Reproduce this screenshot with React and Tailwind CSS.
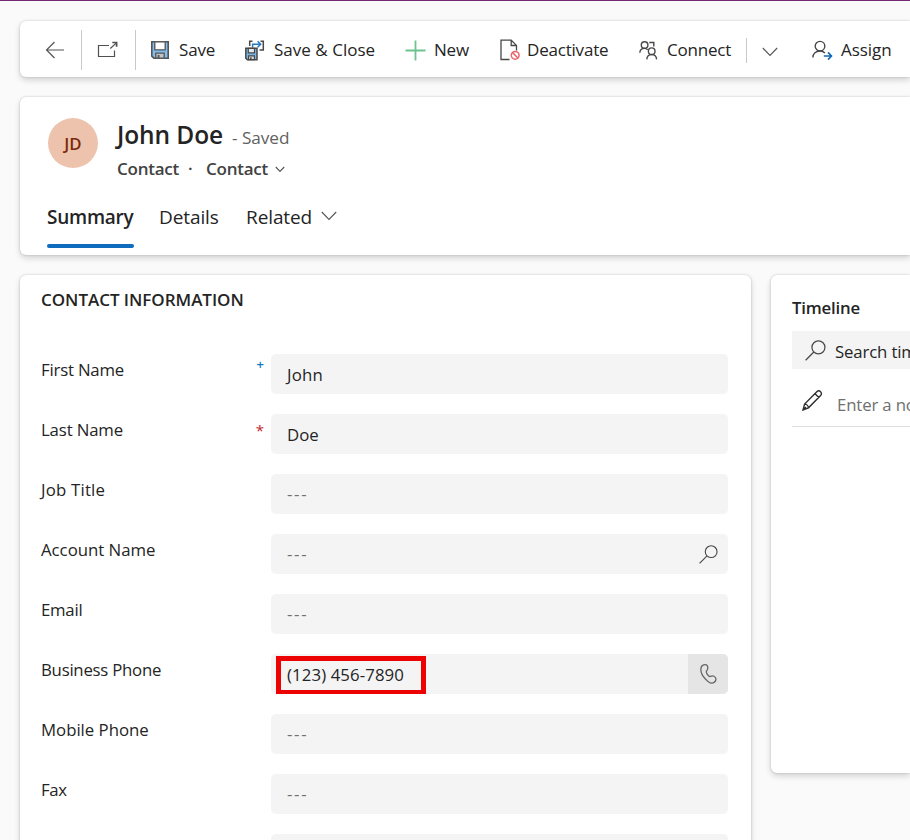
import React from "react";

const card = "bg-white shadow-[0_0_2px_rgba(0,0,0,0.22),0_3px_6px_rgba(0,0,0,0.16)]";

function Svg({ w, h, children, className = "", color = "#484848", sw = 1.2 }) {
  return (
    <svg width={w} height={h} viewBox={`0 0 ${w} ${h}`} fill="none" stroke={color} strokeWidth={sw} className={`shrink-0 ${className}`}>
      {children}
    </svg>
  );
}

const BackIcon = () => (
  <Svg w={20} h={20} sw={1.2} color="#555555">
    <path d="M19 10H2M9.500 2L1.500 10l8 8" />
  </Svg>
);

const PopOutIcon = () => (
  <Svg w={22} h={18} color="#505050">
    <path d="M12 4.500H1.500V15.500h16V9.500M13.300 7.500L19.400 1.900" />
    <path d="M15.300 1.500h4.300v4.300" strokeWidth="1.7" />
  </Svg>
);

const SaveIcon = () => (
  <Svg w={18} h={18} color="#555555" sw={1.6}>
    <path d="M.8.800h16.400v16.400H2.900L.8 15.200z" fill="#83bdec" />
    <path d="M3.800.800h10.400v8H3.800z" fill="#fff" strokeWidth="1.3" />
    <path d="M4.800 17.200v-5h8.400v5z" fill="#c4c4c4" strokeWidth="1.3" />
    <path d="M7.600 14v3.200" strokeWidth="1.800" />
  </Svg>
);

const SaveCloseIcon = () => (
  <Svg w={21} h={21} color="#484848" sw={1.5}>
    <path d="M7.500 1.300H4.700V6M15.500 1.300h2.800v8.800h-3.800" />
    <path d="M7.600 7.500V4.200h8M12.600 1.200l3.100 3-3.100 3" stroke="#2478c4" strokeWidth="1.500" />
    <path d="M.8 8.300h11.200v11.400H2.400L.8 18.100z" fill="#78b6e6" />
    <path d="M3.300 8.300h6.200v4.600H3.300z" fill="#e8e8e8" strokeWidth="1.200" />
    <path d="M3.600 19.700v-3.800h5.800v3.800z" fill="#ddd" strokeWidth="1.200" />
    <path d="M5.900 17.300v2.200" />
  </Svg>
);

const PlusIcon = () => (
  <Svg w={21} h={21} color="#6dc38e" sw={1.8}>
    <path d="M10.500.500v20M.500 10.500h20" />
  </Svg>
);

const DeactivateIcon = () => (
  <Svg w={21} h={22} sw={1.300}>
    <path d="M9.500 20.500H1V1.200h10.200l5.300 5.200v5M11.200 1.200v5.300h5.300" />
    <circle cx="15.200" cy="16.300" r="3.900" stroke="#ec6369" strokeWidth="1.500" />
    <path d="M12.500 13.600l5.400 5.400" stroke="#ec6369" strokeWidth="1.500" />
  </Svg>
);

const ConnectIcon = () => (
  <Svg w={19} h={21} sw={1.4}>
    <circle cx="5.600" cy="5" r="3.300" />
    <path d="M.8 12.700C1 10 3 8.400 5.400 8.400c1.400 0 2.400.400 3.300 1.300M10.300 2.500h4.500V6.600" />
    <circle cx="12.700" cy="11.200" r="3.300" />
    <path d="M7.800 19.400c.2-3 2.200-4.800 4.900-4.800s4.700 1.800 4.900 4.800" />
  </Svg>
);

const AssignIcon = () => (
  <Svg w={22} h={21} sw={1.4}>
    <circle cx="8" cy="6.200" r="4.800" />
    <path d="M.9 17.400c0-3.800 3-6.400 7.100-6.400 2.200 0 3.600.600 4.900 2" />
    <path d="M11.800 16h7.500M16 12.400l3.500 3.600-3.500 3.600" stroke="#1267b4" strokeWidth="1.600" />
  </Svg>
);

const Chevron = ({ w = 16, h = 10, className = "" }) => (
  <Svg w={w} h={h} className={className} sw={1.1} color="#555555">
    <path d={`M.8 1l${w / 2 - 0.8} ${h - 2.5}L${w - 0.8} 1`} />
  </Svg>
);

const SearchIcon = ({ size = 19 }) => (
  <svg width={size} height={size} viewBox="0 0 20 20" fill="none" stroke="#4a4a4a" strokeWidth="1.2" className="shrink-0">
    <circle cx="12.800" cy="7" r="6.200" />
    <path d="M8.400 11.400L.600 19.300" />
  </svg>
);

const PhoneIcon = () => (
  <Svg w={17} h={22} color="#666666" sw={1.300}>
    <path d="M2.600 2.400c1.500-1 3.700-1.200 4.600.2.900 1.600.9 3.100-.1 4.500-.8.9-1 1.600-.6 2.600.6 1.500 1.500 2.700 2.500 3.500.9.600 1.500.300 2.400-.1 1.700-.6 3.700.300 4.300 2 .500 1.500-.2 3.300-1.600 4.300-2.500 1.500-5.800.1-8.500-3.200C2 12.700.600 9 .9 5.600c.1-1.400.700-2.500 1.700-3.200z" />
  </Svg>
);

const PencilIcon = () => (
  <Svg w={21} h={21} color="#303030" sw={1.4}>
    <path d="M1 20l1.600-6L14.800 1.800c1.100-1.100 2.700-1.100 3.800-.1 1.100 1.100 1.100 2.800 0 3.900L6.500 17.800zM13 3.700l3.900 3.900M2.600 14c1.900.1 3.700 1.900 3.900 3.800M1 20l3-3" />
  </Svg>
);

function Command({ icon, label, className, iconBox, track = "" }) {
  return (
    <button className={`flex shrink-0 items-center text-left ${className}`}>
      <span className={`flex shrink-0 ${iconBox}`}>{icon}</span>
      <span className={`whitespace-nowrap ${track}`}>{label}</span>
    </button>
  );
}

function Toolbar() {
  return (
    <div className={`flex h-14 shrink-0 items-center rounded-l-md pl-[25px] pt-0.5 text-[17px] ${card}`}>
      <span className="w-9 shrink-0"><BackIcon /></span>
      <span className="h-10 w-px shrink-0 bg-[#c8c8c8]" />
      <span className="w-[53px] shrink-0 pl-[15px]"><PopOutIcon /></span>
      <span className="h-10 w-px shrink-0 bg-[#c8c8c8]" />
      <Command icon={<SaveIcon />} label="Save" className="ml-[15px] w-[94px]" iconBox="w-7" track="tracking-[-0.15px]" />
      <Command icon={<SaveCloseIcon />} label="Save & Close" className="w-[160px]" iconBox="w-[29px]" track="tracking-[0.02px]" />
      <Command icon={<PlusIcon />} label="New" className="w-[95px]" iconBox="w-[29px]" track="tracking-[-0.2px]" />
      <Command icon={<DeactivateIcon />} label="Deactivate" className="w-[139px]" iconBox="w-[27px]" track="tracking-[-0.2px]" />
      <Command icon={<ConnectIcon />} label="Connect" className="w-[107px]" iconBox="w-7" track="tracking-[-0.2px]" />
      <span className="h-[25px] w-px shrink-0 bg-[#c8c8c8]" />
      <span className="w-[65px] shrink-0 pl-[15px] pt-1"><Chevron w={16} h={10} /></span>
      <Command icon={<AssignIcon />} label="Assign" className="w-24" iconBox="w-[29px]" track="tracking-[-0.05px]" />
    </div>
  );
}

function RecordHeader() {
  return (
    <div className={`mt-5 h-[158px] shrink-0 rounded-l-md pl-[27px] ${card}`}>
      <div className="flex pt-[21px]">
        <div className="ml-px flex size-[50px] items-center justify-center rounded-full bg-[#eec3ad] pt-px text-[16.8px] font-semibold text-[#7a2a0c]">
          <span>JD</span>
        </div>
        <div className="ml-[19px]">
          <div className="flex h-[34px] items-baseline">
            <h1 className="w-[115px] whitespace-nowrap text-[24.5px] font-semibold leading-[34px] tracking-[-0.1px] text-[#242424]">John Doe</h1>
            <span className="text-[17.2px] tracking-[-0.05px] text-[#616161]">- Saved</span>
          </div>
          <div className="flex h-[33px] items-center text-[17px] font-semibold tracking-[-0.25px] text-[#424242]">
            <span className="w-[71px]">Contact</span>
            <span className="w-[18px]">·</span>
            <span className="w-[69px]">Contact</span>
            <Chevron w={10} h={7} className="mt-0.5" />
          </div>
        </div>
      </div>
      <div className="mt-5 flex text-[19px] leading-6 text-[#242424]">
        <div className="w-[87px]">
          <div className="font-semibold tracking-[-0.25px]">Summary</div>
          <div className="mt-[15px] h-1 rounded-full bg-[#0f6cbd]" />
        </div>
        <div className="ml-[25px] w-[87px] tracking-[-0.1px]">Details</div>
        <div className="w-[75px] tracking-[-0.1px]">Related</div>
        <Chevron w={16} h={10} className="mt-1.5" />
      </div>
    </div>
  );
}

const fields = [
  { label: "First Name", value: "John", mark: "+", track: "tracking-[-0.2px]", valueTrack: "tracking-[0.2px]" },
  { label: "Last Name", value: "Doe", mark: "*", track: "tracking-[-0.15px]", valueTrack: "tracking-[0px]" },
  { label: "Job Title", track: "tracking-[0.2px]" },
  { label: "Account Name", icon: "search", track: "tracking-[-0.02px]" },
  { label: "Email", track: "tracking-[-0.25px]" },
  { label: "Business Phone", value: "(123) 456-7890", icon: "phone", track: "tracking-[-0.25px]", valueTrack: "tracking-[0.1px]" },
  { label: "Mobile Phone", track: "tracking-[-0.02px]" },
  { label: "Fax", track: "tracking-[-0.4px]" },
];

function Field({ label, value, mark, icon, track, valueTrack }) {
  return (
    <div className="flex h-10">
      <div className="flex w-[230px] shrink-0 justify-between pr-[7px]">
        <span className={`pt-1 leading-6 ${track}`}>{label}</span>
        {mark === "+" && <span className="text-[13px] font-semibold leading-[20px] text-[#0f78c4]">+</span>}
        {mark === "*" && <span className="text-[15px] leading-[32px] text-[#c4262e]">*</span>}
      </div>
      <div className="relative flex w-[457px] items-center justify-between overflow-hidden rounded-[5px] bg-[#f4f4f4] pl-4">
        {value ? (
          <span className={`pt-0.5 ${valueTrack}`}>{value}</span>
        ) : (
          <span className="tracking-[1.7px] text-[#707070]">---</span>
        )}
        {icon === "search" && <span className="pr-[10px]"><SearchIcon /></span>}
        {icon === "phone" && (
          <>
            <span className="flex h-10 w-10 items-center justify-center bg-[#e5e5e5]"><PhoneIcon /></span>
            <span className="absolute left-[5px] top-[2px] h-[39px] w-[150px] border-[5px] border-[#ec0202]" />
          </>
        )}
      </div>
    </div>
  );
}

function ContactInformation() {
  return (
    <section className={`h-[600px] w-[731px] shrink-0 rounded-md pl-[21px] pt-[13px] ${card}`}>
      <h2 className="text-[17px] font-semibold leading-6 tracking-[-0.03px]">CONTACT INFORMATION</h2>
      <div className="mt-[42px] flex flex-col gap-5 text-[16.8px]">
        {fields.map((f) => (
          <Field key={f.label} {...f} />
        ))}
        <div className="ml-[230px] h-10 w-[457px] rounded-[5px] bg-[#f4f4f4]" />
      </div>
    </section>
  );
}

function Timeline() {
  return (
    <section className={`h-[498px] min-w-0 flex-1 overflow-hidden rounded-l-md pl-[21px] pt-[21px] ${card}`}>
      <h2 className="text-[16.8px] font-semibold leading-6 tracking-[-0.2px]">Timeline</h2>
      <div className="mt-[11px] flex h-[38px] items-center bg-[#f4f4f4] pl-[13px] text-[16.8px]">
        <span className="w-[30px] shrink-0"><SearchIcon size={21} /></span>
        <span className="whitespace-nowrap pt-1 tracking-[-0.15px]">Search timeline</span>
      </div>
      <div className="flex h-[58px] items-center border-b border-[#e0e0e0] pl-[10px] pt-2.5 text-[16.8px] text-[#707070]">
        <span className="w-[35px] shrink-0 pb-1"><PencilIcon /></span>
        <span className="whitespace-nowrap pt-1 tracking-[-0.15px]">Enter a note...</span>
      </div>
    </section>
  );
}

export default function App() {
  return (
    <div className="flex h-[840px] w-[910px] flex-col overflow-hidden border-t border-[#742774] bg-[#fafafa] pl-5 pt-5 font-['Open_Sans','Noto_Sans',sans-serif] text-[#242424]">
      <Toolbar />
      <RecordHeader />
      <div className="mt-5 flex items-start gap-5">
        <ContactInformation />
        <Timeline />
      </div>
    </div>
  );
}
